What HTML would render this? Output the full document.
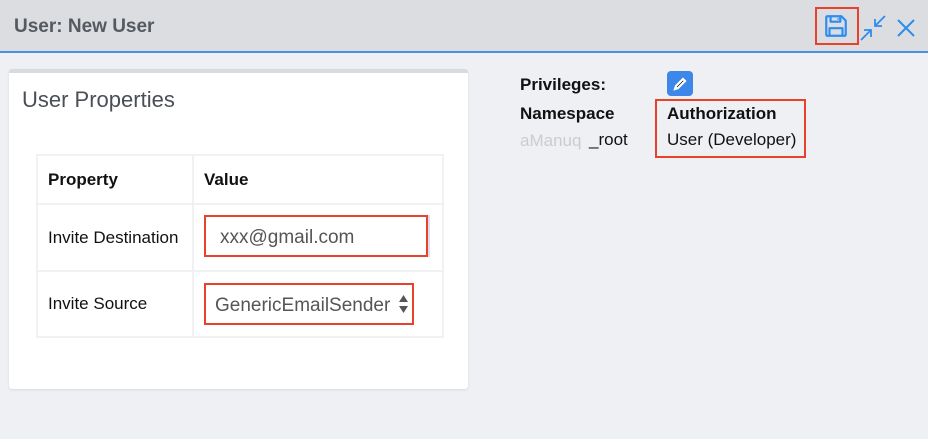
<!DOCTYPE html>
<html><head><style>
*{margin:0;padding:0;box-sizing:border-box}
body{width:928px;height:439px;background:#eef0f4;font-family:"Liberation Sans",sans-serif;position:relative;overflow:hidden;color:#111}
.hdr{position:absolute;left:0;top:0;width:928px;height:53px;background:#dcdde1;border-bottom:2px solid #4a90e2}
.hdr .t{position:absolute;left:14px;top:16px;font-size:19px;font-weight:bold;color:#555a61}
.abs{position:absolute}
.card{position:absolute;left:9px;top:69px;width:459px;height:320px;background:#fff;border-top:4px solid #d8dae0;border-radius:3px;box-shadow:0 1px 2px rgba(0,0,0,.1)}
.red{border:2px solid #e8412c}
table{position:absolute;left:36px;top:154px;border-collapse:collapse;font-size:17px}
td{border:2px solid #f0f1f3;padding-left:10px}
</style></head><body>
<div class="hdr"><div class="t">User: New User</div>
<div class="abs red" style="left:815px;top:7px;width:44px;height:38px"></div>
<svg class="abs" style="left:823px;top:13px" width="26" height="26" viewBox="0 0 24 24" fill="none" stroke="#2d8cf0" stroke-width="2" stroke-linejoin="round"><path d="M3 4a1 1 0 0 1 1-1h13l4 4v13a1 1 0 0 1-1 1H4a1 1 0 0 1-1-1z"/><path d="M7 3v5h9V3M14 5v1"/><path d="M6 21v-7h12v7"/></svg>
<svg class="abs" style="left:859px;top:14px" width="28" height="28" viewBox="0 0 28 28" fill="none" stroke="#2d8cf0" stroke-width="1.8"><path d="M2 26l10-10M5 16h7v7"/><path d="M26 2L16 12M16 5v7h7"/></svg>
<svg class="abs" style="left:895px;top:17px" width="22" height="22" viewBox="0 0 22 22" stroke="#2d8cf0" stroke-width="2"><path d="M3 3l16 16M19 3L3 19"/></svg>
</div>
<div class="card"><div class="abs" style="left:13px;top:14px;font-size:22px;color:#4a4f56">User Properties</div></div>
<table>
<tr style="height:49px"><td style="width:156px;font-weight:bold">Property</td><td style="width:250px;font-weight:bold">Value</td></tr>
<tr style="height:67px"><td>Invite Destination</td><td></td></tr>
<tr style="height:66px"><td>Invite Source</td><td></td></tr>
</table>
<div class="abs red" style="left:204px;top:215px;width:224px;height:42px;font-size:19px;color:#555;padding:10px 0 0 14px;box-shadow:2px 0 0 #dde">xxx@gmail.com</div>
<div class="abs red" style="left:204px;top:283px;width:210px;height:42px;font-size:19px;color:#555;padding:10px 0 0 9px">GenericEmailSender</div>
<svg class="abs" style="left:398px;top:293px" width="11" height="22" viewBox="0 0 11 22" fill="#555"><path d="M1 9L5.5 2 10 9zM1 13l4.5 7 4.5-7z"/></svg>
<div class="abs" style="left:520px;top:75px;font-size:17px;font-weight:bold">Privileges:</div>
<div class="abs" style="left:667px;top:71px;width:26px;height:25px;background:#3d87ea;border-radius:4px"></div>
<svg class="abs" style="left:673px;top:77px" width="14" height="14" viewBox="0 0 14 14" stroke="#fff" stroke-width="2.2"><path d="M2 12l1-3 7-7 2 2-7 7z"/></svg>
<div class="abs" style="left:520px;top:104px;font-size:17px;font-weight:bold">Namespace</div>
<div class="abs" style="left:520px;top:131px;font-size:17px;color:#ccc">aManuq</div>
<div class="abs" style="left:589px;top:130px;font-size:17px">_root</div>
<div class="abs red" style="left:655px;top:99px;width:151px;height:59px"></div>
<div class="abs" style="left:667px;top:104px;font-size:17px;font-weight:bold">Authorization</div>
<div class="abs" style="left:667px;top:130px;font-size:17px">User (Developer)</div>
</body></html>
